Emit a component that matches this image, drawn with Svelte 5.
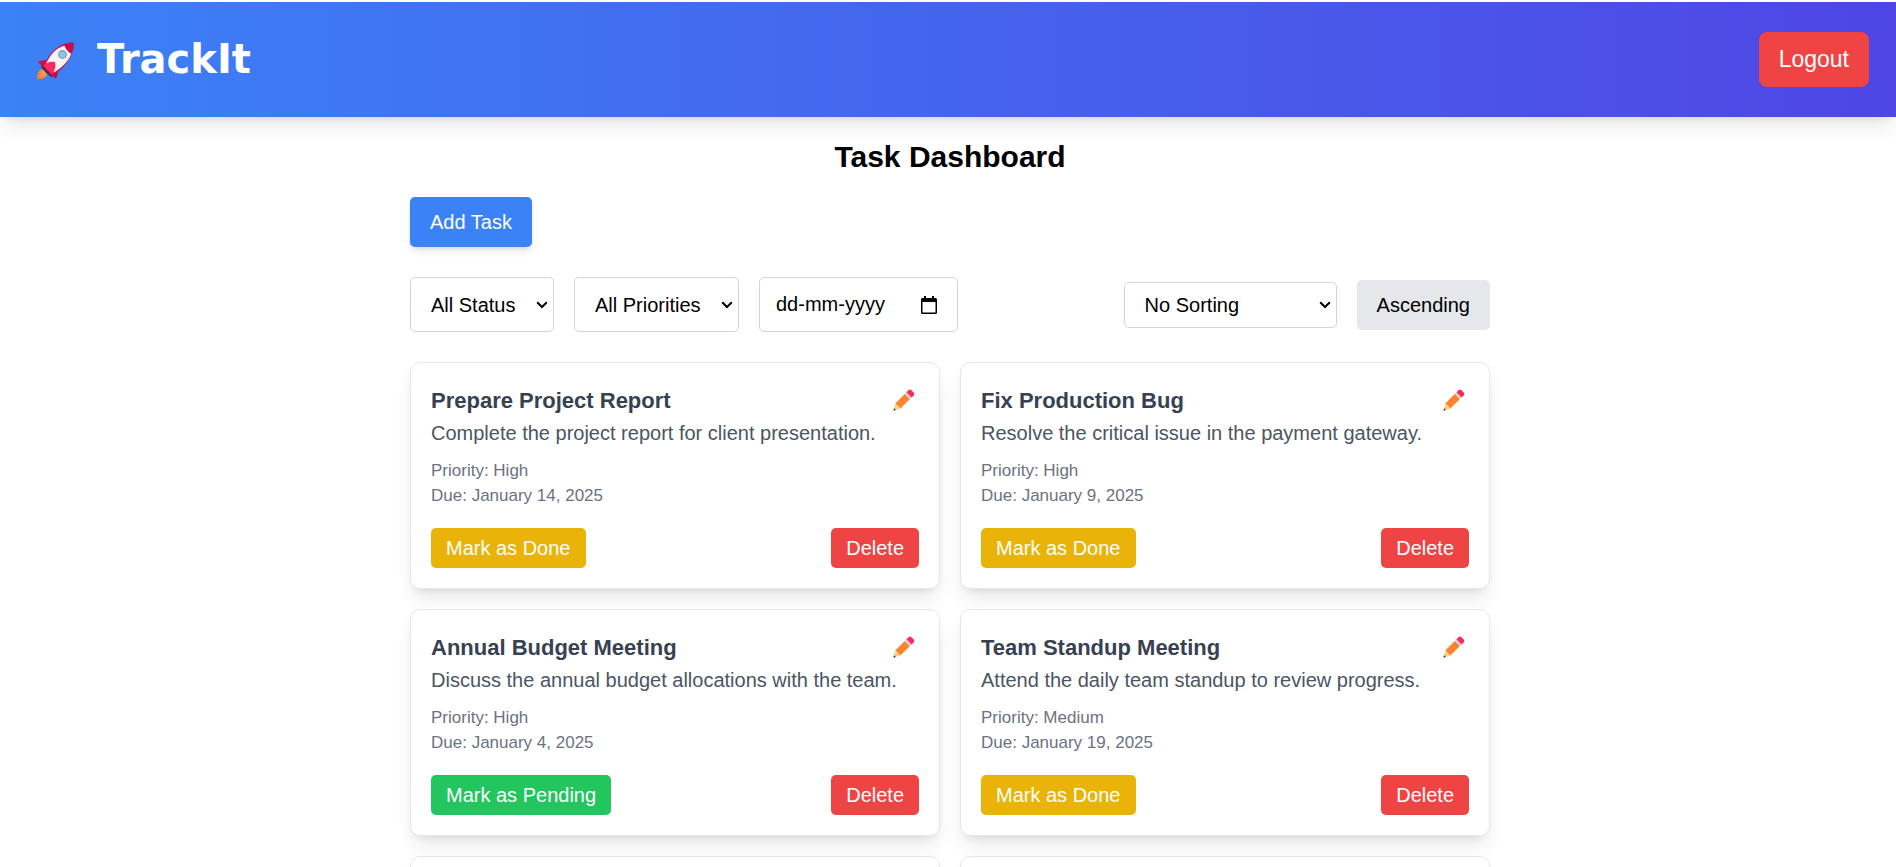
<script>
  let ascending = $state(true);
  let tasks = $state([
    { title: 'Prepare Project Report', text: 'Complete the project report for client presentation.', priority: 'High', due: 'January 14, 2025', done: false },
    { title: 'Fix Production Bug', text: 'Resolve the critical issue in the payment gateway.', priority: 'High', due: 'January 9, 2025', done: false },
    { title: 'Annual Budget Meeting', text: 'Discuss the annual budget allocations with the team.', priority: 'High', due: 'January 4, 2025', done: true },
    { title: 'Team Standup Meeting', text: 'Attend the daily team standup to review progress.', priority: 'Medium', due: 'January 19, 2025', done: false }
  ]);
  const remove = (task) => (tasks = tasks.filter((t) => t !== task));
</script>

{#snippet chevron()}
  <svg class="chevron" viewBox="0 0 12 8" aria-hidden="true">
    <path d="M1.2 1.2 6 6l4.800-4.800" fill="none" stroke="#000" stroke-width="2" />
  </svg>
{/snippet}

<div class="page">
  <header>
    <div class="brand">
      <svg class="rocket" viewBox="6 10 39 39" aria-hidden="true">
        <path d="M12.500 38.500C9.500 39 6.800 43 7.300 49c3 .6 7.500-.4 10-3.800z" fill="#ff822d" />
        <path d="M9.500 46.500c.5-3.500 2-5.500 4-6l3.200 3.700c-1.500 1.700-4 2.500-7.200 2.300z" fill="#ff9a5a" />
        <path d="M18 29.500 8 31.500c1.500 2.500 3.500 3 4.500 6.500l10 8.500c1.500.3 2.500 1.800 3.500 2 2-3.500 2.500-7 2-10z" fill="#ca0b4a" />
        <path d="M43.500 12.800c1.200 5.700-2.500 16-8.500 22.500-3.500 4-7.500 7-10.500 8.700l-10.300-9.500C17 29 20.500 23 26 18.500c6-4.500 13-6.700 17.500-5.700z" fill="#ca0b4a" />
        <path d="M34.500 15.800c1.500 4 4 6.500 6.800 8-1.600 4-4 8-7.300 11-3.500 3.500-7 6-10 7.700l-8.500-8C18 29 21.500 23.500 26.500 19.500c2.500-1.800 5.300-3 8-3.700z" fill="#f4f4f4" />
        <path d="m12 35.500 10.500 10.800-1.700 1L11 37.500z" fill="#46325d" />
        <path d="M13.500 35.500c2-2.700 7-4.200 11.500-3.500 1.200 5-.2 9-3.300 12.500z" fill="#fc2a60" />
        <circle cx="32.500" cy="24.500" r="4.400" fill="#8d98a5" />
        <circle cx="32.500" cy="24.500" r="3.100" fill="#83cbff" />
      </svg>
      <h1>TrackIt</h1>
    </div>
    <button class="logout">Logout</button>
  </header>

  <main>
    <h2>Task Dashboard</h2>
    <button class="add">Add Task</button>

    <div class="filters">
      <div class="group">
        <div class="field">
          <select class="tall" aria-label="Status"><option>All Status</option></select>
          {@render chevron()}
        </div>
        <div class="field">
          <select class="tall" aria-label="Priority"><option>All Priorities</option></select>
          {@render chevron()}
        </div>
        <div class="field">
          <input class="date" type="text" placeholder="dd-mm-yyyy" aria-label="Due date" />
          <svg class="calendar" viewBox="0 0 16 18" aria-hidden="true">
            <path d="M3 0h2v2h6V0h2v2h1.500Q16 2 16 3.500v13Q16 18 14.500 18h-13Q0 18 0 16.500v-13Q0 2 1.500 2H3zM1.500 6v10.500h13V6z" fill="#000" fill-rule="evenodd" />
          </svg>
        </div>
      </div>
      <div class="group">
        <div class="field">
          <select class="sort" aria-label="Sort by"><option>No Sorting</option></select>
          {@render chevron()}
        </div>
        <button class="order" onclick={() => (ascending = !ascending)}>
          {ascending ? 'Ascending' : 'Descending'}
        </button>
      </div>
    </div>

    <div class="cards">
      {#each tasks as task}
        <article>
          <div class="head">
            <h3>{task.title}</h3>
            <button class="edit" aria-label="Edit">
              <svg viewBox="0 0 22 22" aria-hidden="true">
                <path d="M2.300 14.500 12 4.800 17 10l-9.700 9.500z" fill="#ff822d" />
                <path d="m2.500 14.200 5 5.200L.6 21.600z" fill="#ffce7c" />
                <path d="m1.200 19.300 1.700 1.600-2.500.9z" fill="#402a32" />
                <path d="m11.700 5 2.200-2.200 5.200 5.200-2.200 2.200z" fill="#d3d3d3" />
                <path d="M13.500 3.200 15.600 1.100Q17 0 18.400 1.300l2.300 2.300q1.200 1.400 0 2.800L18.700 8.400z" fill="#fc2a60" />
              </svg>
            </button>
          </div>
          <p class="text">{task.text}</p>
          <div class="meta">
            <p>Priority: {task.priority}</p>
            <p>Due: {task.due}</p>
          </div>
          <div class="actions">
            <button class:pending={task.done} class="mark" onclick={() => (task.done = !task.done)}>
              {task.done ? 'Mark as Pending' : 'Mark as Done'}
            </button>
            <button class="delete" onclick={() => remove(task)}>Delete</button>
          </div>
        </article>
      {/each}
      <article class="blank"></article>
      <article class="blank"></article>
    </div>
  </main>
</div>

<style>
  :global(body) {
    margin: 0;
    background: #fff;
  }
  .page {
    height: 100vh;
    overflow: hidden;
    box-sizing: border-box;
    padding-top: 2px;
    font: 20px/30px 'Liberation Sans', Arial, sans-serif;
    color: #000;
  }
  .page :is(h1, h2, h3, p) {
    margin: 0;
  }
  button,
  select,
  input {
    font: inherit;
    color: inherit;
    margin: 0;
    box-sizing: border-box;
  }
  button {
    border: 0;
    border-radius: 5px;
    padding: 10px 20px;
    cursor: pointer;
  }
  header {
    display: flex;
    align-items: center;
    justify-content: space-between;
    padding: 30px 27px 30px 36px;
    background: linear-gradient(to right, #3b82f6, #4f46e5);
    box-shadow: 0 12px 19px -4px #0000001a, 0 5px 8px -5px #0000001a;
  }
  .brand {
    display: flex;
    align-items: center;
    gap: 22px;
  }
  .rocket {
    width: 39px;
    height: 39px;
  }
  h1 {
    font: 900 40px/45px 'DejaVu Sans', Verdana, sans-serif;
    color: #fff;
  }
  .logout {
    padding: 10px 20px;
    border-radius: 8px;
    background: #ef4444;
    color: #fff;
    font-size: 23px;
    line-height: 35px;
  }
  main {
    box-sizing: border-box;
    max-width: 1124px;
    margin: 0 auto;
    padding: 20px 20px 20px 24px;
  }
  h2 {
    font-size: 30px;
    line-height: 40px;
    text-align: center;
  }
  .add {
    display: block;
    margin: 20px 0 30px;
    background: #3b82f6;
    color: #fff;
    box-shadow: 0 5px 8px -1px #0000001a, 0 2px 5px -2px #0000001a;
  }
  .filters {
    display: flex;
    flex-wrap: wrap;
    align-items: center;
    justify-content: space-between;
    gap: 20px;
    margin-bottom: 30px;
  }
  .group {
    display: flex;
    align-items: center;
    gap: 20px;
  }
  .field {
    display: flex;
    position: relative;
  }
  select,
  input {
    appearance: none;
    border: 1px solid #d1d5db;
    border-radius: 5px;
    background: #fff;
  }
  select {
    padding: 0 37px 0 20px;
  }
  .tall,
  .date {
    height: 55px;
  }
  .sort {
    width: 213px;
    height: 46px;
  }
  .date {
    width: 199px;
    padding: 0 50px 0 16px;
  }
  .date::placeholder {
    color: #000;
    opacity: 1;
  }
  .chevron,
  .calendar {
    position: absolute;
    pointer-events: none;
    top: 50%;
    transform: translateY(-50%);
  }
  .chevron {
    right: 6px;
    width: 12px;
    height: 8px;
  }
  .calendar {
    right: 21px;
    width: 16px;
    height: 18px;
  }
  .order {
    background: #e5e7eb;
  }
  .cards {
    display: grid;
    grid-template-columns: 1fr 1fr;
    gap: 20px;
  }
  article {
    border: 1px solid #e5e7eb;
    border-radius: 10px;
    padding: 20px;
    background: #fff;
    box-shadow: 0 12px 19px -4px #0000001a, 0 5px 8px -5px #0000001a;
  }
  .blank {
    min-height: 185px;
  }
  .head {
    display: flex;
    align-items: center;
    justify-content: space-between;
  }
  h3 {
    font-size: 22px;
    line-height: 35px;
    color: #374151;
  }
  .edit {
    display: flex;
    padding: 0 4px 2px;
    background: none;
  }
  .edit svg {
    width: 22px;
    height: 22px;
  }
  .text {
    color: #4b5563;
  }
  .meta {
    margin-top: 10px;
    font-size: 17px;
    line-height: 25px;
    color: #6b7280;
  }
  .actions {
    display: flex;
    justify-content: space-between;
    margin-top: 20px;
  }
  .actions button {
    padding: 5px 15px;
    color: #fff;
  }
  .mark {
    background: #eab308;
  }
  .mark.pending {
    background: #22c55e;
  }
  .delete {
    background: #ef4444;
  }
</style>
